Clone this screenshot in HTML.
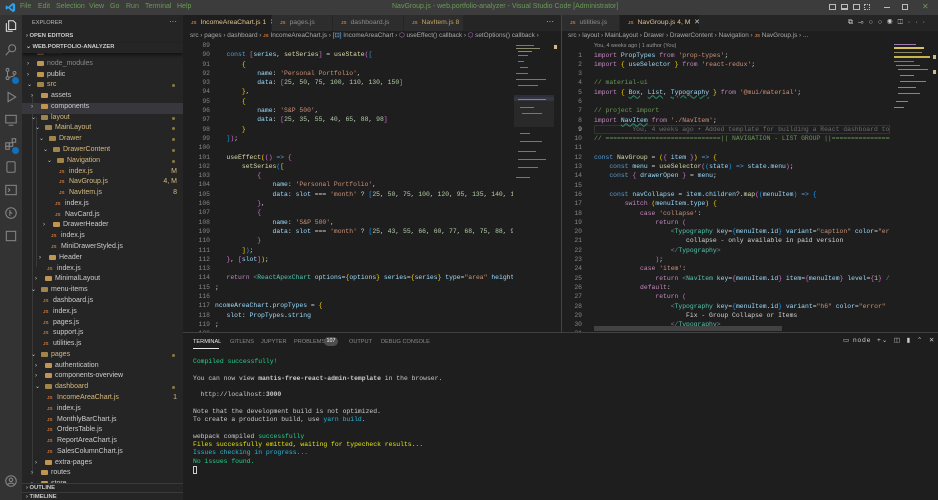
<!DOCTYPE html>
<html><head><meta charset="utf-8"><style>
*{margin:0;padding:0;box-sizing:border-box}
body{width:938px;height:500px;overflow:hidden;background:#1e1e1e;font-family:"Liberation Sans",sans-serif;position:relative;color:#ccc}
.a{position:absolute}
#title{left:0;top:0;width:938px;height:15px;background:#3c3c3c;font-size:7px;color:#ccc}
#title span.m{position:absolute;top:3px}
#act{left:0;top:15px;width:22px;height:485px;background:#333}
#side{left:22px;top:15px;width:161px;height:485px;background:#252526;font-size:7px;color:#ccc;overflow:hidden}
.row{position:absolute;left:0;width:161px;height:10.8px;line-height:10.8px;white-space:nowrap}
.row .t{position:absolute;top:0}
.fo{display:inline-block;width:7px;height:5px;background:#c09553;border-radius:1px;vertical-align:middle;margin-top:-1px}
.js{position:absolute;font-size:4.5px;font-weight:bold;color:#d0793a;top:0}
.dot{position:absolute;right:8px;top:4px;width:3px;height:3px;border-radius:50%;background:#8a7a3c}
.chev{position:absolute;top:0;color:#ccc;font-size:6px}
.tab{position:absolute;top:15px;height:16px;background:#2d2d2d;font-size:6.8px;line-height:16px;color:#8b8b8b;white-space:nowrap;padding-left:8px;border-right:1px solid #252526}
.tab.on{background:#1e1e1e;color:#e2c08d}
.tab b{font-size:4.5px;color:#d0793a;margin-right:4px}
.bc{position:absolute;top:31px;height:10px;font-size:6.4px;line-height:10px;color:#a9a9a9;white-space:nowrap;overflow:hidden}
pre{font-family:"Liberation Mono",monospace;font-size:6.4px;line-height:9.3px;color:#d4d4d4;position:absolute;white-space:pre}
.g{color:#858585;text-align:right}
.k{color:#569cd6}.c{color:#c586c0}.v{color:#9cdcfe}.f{color:#dcdcaa}.s{color:#ce9178}.n{color:#b5cea8}.m{color:#6a9955}.t{color:#4ec9b0}.b1{color:#ffd700}.b2{color:#da70d6}.b3{color:#179fff}.gr{color:#808080}.sq{text-decoration:underline wavy #2f8f6f}
#panel{left:183px;top:332px;width:755px;height:168px;background:#1e1e1e;border-top:1px solid #414141}
.pt{position:absolute;top:6px;font-size:5.6px;color:#8b8b8b}
.mini{position:absolute;height:1px}
</style></head><body>

<div id="title" class="a">
  <svg class="a" style="left:5px;top:2px" width="11" height="11" viewBox="0 0 24 24"><path d="M17 2 L22 4.5 V19.5 L17 22 L7 13.5 L3 16.5 L1.5 15.5 V8.5 L3 7.5 L7 10.5 Z M17 7 L11 12 L17 17 Z" fill="#2aa2f0"/></svg>
  <span class="m" style="left:20px">File</span><span class="m" style="left:38px">Edit</span><span class="m" style="left:56px">Selection</span><span class="m" style="left:89px">View</span><span class="m" style="left:110px">Go</span><span class="m" style="left:126px">Run</span><span class="m" style="left:145px">Terminal</span><span class="m" style="left:177px">Help</span>
  <span class="m" style="left:392px">NavGroup.js - web.portfolio-analyzer - Visual Studio Code [Administrator]</span>
  <div class="a" style="left:829px;top:4px;width:7px;height:6px;border:1px solid #bbb"></div>
  <div class="a" style="left:841px;top:4px;width:7px;height:6px;border:1px solid #bbb;border-bottom-width:2px"></div>
  <div class="a" style="left:853px;top:4px;width:7px;height:6px;border:1px solid #bbb"></div>
  <div class="a" style="left:864px;top:4px;width:6px;height:6px;border:1px dotted #bbb"></div>
  <div class="a" style="left:884px;top:7px;width:6px;height:1px;background:#bbb"></div>
  <div class="a" style="left:902px;top:4px;width:6px;height:6px;border:1px solid #bbb"></div>
  <span class="m" style="left:922px;font-size:8px;top:2px">✕</span>
</div>

<div id="act" class="a">
  <svg class="a" style="left:4px;top:4px" width="14" height="14" viewBox="0 0 24 24" fill="none" stroke="#e0e0e0" stroke-width="1.8"><path d="M8 3h8l4 4v11H8z M4 7v14h11"/></svg>
  <svg class="a" style="left:4px;top:28px" width="14" height="14" viewBox="0 0 24 24" fill="none" stroke="#858585" stroke-width="1.8"><circle cx="14" cy="9" r="6"/><path d="M10 13L3 21"/></svg>
  <svg class="a" style="left:4px;top:52px" width="14" height="14" viewBox="0 0 24 24" fill="none" stroke="#858585" stroke-width="1.8"><circle cx="6" cy="5" r="2.5"/><circle cx="6" cy="19" r="2.5"/><circle cx="18" cy="10" r="2.5"/><path d="M6 8v8 M18 13c0 4-6 3-10 5"/></svg>
  <div class="a" style="left:12px;top:62px;width:7px;height:7px;border-radius:50%;background:#0e70c0"></div>
  <svg class="a" style="left:4px;top:75px" width="14" height="14" viewBox="0 0 24 24" fill="none" stroke="#858585" stroke-width="1.8"><path d="M7 4l13 8-13 8z"/></svg>
  <svg class="a" style="left:4px;top:98px" width="14" height="14" viewBox="0 0 24 24" fill="none" stroke="#858585" stroke-width="1.8"><rect x="3" y="4" width="18" height="13"/><path d="M8 21h8"/></svg>
  <svg class="a" style="left:4px;top:122px" width="14" height="14" viewBox="0 0 24 24" fill="none" stroke="#858585" stroke-width="1.8"><rect x="3" y="10" width="6" height="6"/><rect x="9" y="10" width="6" height="6"/><rect x="3" y="16" width="6" height="5"/><rect x="14" y="3" width="6" height="6"/></svg>
  <div class="a" style="left:12px;top:132px;width:7px;height:7px;border-radius:50%;background:#0e70c0"></div>
  <svg class="a" style="left:4px;top:145px" width="14" height="14" viewBox="0 0 24 24" fill="none" stroke="#858585" stroke-width="1.8"><rect x="5" y="3" width="14" height="18" rx="2"/></svg>
  <svg class="a" style="left:4px;top:168px" width="14" height="14" viewBox="0 0 24 24" fill="none" stroke="#858585" stroke-width="1.8"><rect x="3" y="4" width="18" height="16"/><path d="M7 9l3 3-3 3"/></svg>
  <svg class="a" style="left:4px;top:191px" width="14" height="14" viewBox="0 0 24 24" fill="none" stroke="#858585" stroke-width="1.8"><circle cx="12" cy="12" r="9"/><path d="M10 7v10 M10 10l4 3"/></svg>
  <svg class="a" style="left:4px;top:214px" width="14" height="14" viewBox="0 0 24 24" fill="none" stroke="#858585" stroke-width="1.8"><rect x="4" y="4" width="16" height="16"/></svg>
  <svg class="a" style="left:4px;top:459px" width="14" height="14" viewBox="0 0 24 24" fill="none" stroke="#858585" stroke-width="1.8"><circle cx="12" cy="12" r="9"/><circle cx="12" cy="10" r="3"/><path d="M6 18c3-3 9-3 12 0"/></svg>
</div>

<div id="side" class="a">
  <div class="a" style="left:10px;top:5px;font-size:5.6px;color:#bbb">EXPLORER</div>
  <div class="a" style="left:147px;top:2px;font-size:8px;color:#bbb">···</div>
  <div class="a" style="left:4px;top:18px;font-size:5.8px;font-weight:bold;color:#ccc">›&nbsp;OPEN EDITORS</div>
  <div class="a" style="left:0;top:28px;width:161px;height:10px;box-shadow:0 2px 3px #111;background:#252526;z-index:2"></div>
  <div class="a" style="left:4px;top:29px;font-size:5.8px;font-weight:bold;color:#ccc;z-index:3">⌄&nbsp;WEB.PORTFOLIO-ANALYZER</div>
  <div class="a" style="left:0;top:88px;width:161px;height:10.8px;background:#37373d"></div>
  <div class="a" style="left:10px;top:80px;width:1px;height:380px;background:#3a3a3a"></div>
  <div class="a" style="left:14px;top:102px;width:1px;height:150px;background:#3a3a3a"></div>
  <div id="rows"></div>
  <div class="a" style="left:0;top:468px;width:161px;height:9px;border-top:1px solid #3a3a3a;font-size:5.8px;font-weight:bold;padding-left:4px;line-height:9px;background:#252526">›&nbsp;OUTLINE</div>
  <div class="a" style="left:0;top:477px;width:161px;height:9px;border-top:1px solid #3a3a3a;font-size:5.8px;font-weight:bold;padding-left:4px;line-height:9px;background:#252526">›&nbsp;TIMELINE</div>
</div>

<div class="tab on" style="left:183px;width:89px"><b>JS</b>IncomeAreaChart.js 1 <span style="color:#ccc">&nbsp;✕</span></div>
<div class="tab" style="left:272px;width:61px"><b>JS</b>pages.js</div>
<div class="tab" style="left:333px;width:71px"><b>JS</b>dashboard.js</div>
<div class="tab" style="left:404px;width:60px;color:#c5a35e"><b>JS</b>NavItem.js 8</div>
<div class="a" style="left:464px;top:15px;width:97px;height:16px;background:#252526"></div>
<div class="a" style="left:546px;top:17px;font-size:8px;color:#ccc">···</div>
<div class="tab" style="left:562px;width:58px"><b>JS</b>utilities.js</div>
<div class="tab on" style="left:620px;width:80px"><b>JS</b>NavGroup.js 4, M <span style="color:#ccc">&nbsp;✕</span></div>
<div class="a" style="left:700px;top:15px;width:238px;height:16px;background:#252526"></div>
<div class="a" style="left:848px;top:19px;font-size:7px;color:#ccc;letter-spacing:5px;white-space:nowrap">⧉⊸○○◉◫···</div>
<div class="a" style="left:561px;top:15px;width:1px;height:317px;background:#444"></div>

<div class="bc" style="left:190px;width:370px">src › pages › dashboard › <span style="color:#d0793a;font-size:4.5px;font-weight:bold">JS</span> IncomeAreaChart.js › <span style="color:#75beff">[⊡]</span> IncomeAreaChart › <span style="color:#b180d7">⬡</span> useEffect() callback › <span style="color:#b180d7">⬡</span> setOptions() callback ›</div>
<div class="bc" style="left:568px;width:370px">src › layout › MainLayout › Drawer › DrawerContent › Navigation › <span style="color:#d0793a;font-size:4.5px;font-weight:bold">JS</span> NavGroup.js › ...</div>

<pre class="g" style="left:183px;top:41px;width:27px">89
90
91
92
93
94
95
96
97
98
99
100
101
102
103
104
105
106
107
108
109
110
111
112
113
114
115
116
117
118
119
120</pre>
<div class="a" style="left:215px;top:41px;width:298px;height:291px;overflow:hidden">
<pre style="left:-3.84px;top:9.3px">
    <span class="k">const</span> <span class="b2">[</span><span class="v">series</span>, <span class="f">setSeries</span><span class="b2">]</span> = <span class="f">useState</span><span class="b2">(</span><span class="b3">[</span>
        <span class="b1">{</span>
            <span class="v">name</span>: <span class="s">'Personal Portfolio'</span>,
            <span class="v">data</span>: <span class="b2">[</span><span class="n">25</span>, <span class="n">50</span>, <span class="n">75</span>, <span class="n">100</span>, <span class="n">110</span>, <span class="n">130</span>, <span class="n">150</span><span class="b2">]</span>
        <span class="b1">}</span>,
        <span class="b1">{</span>
            <span class="v">name</span>: <span class="s">'S&amp;P 500'</span>,
            <span class="v">data</span>: <span class="b2">[</span><span class="n">25</span>, <span class="n">35</span>, <span class="n">55</span>, <span class="n">40</span>, <span class="n">65</span>, <span class="n">88</span>, <span class="n">98</span><span class="b2">]</span>
        <span class="b1">}</span>
    <span class="b3">]</span><span class="b2">)</span>;

    <span class="f">useEffect</span><span class="b1">(</span><span class="b2">()</span> <span class="k">=&gt;</span> <span class="b2">{</span>
        <span class="f">setSeries</span><span class="b3">(</span><span class="b1">[</span>
            <span class="b2">{</span>
                <span class="v">name</span>: <span class="s">'Personal Portfolio'</span>,
                <span class="v">data</span>: <span class="v">slot</span> === <span class="s">'month'</span> ? <span class="b3">[</span><span class="n">25</span>, <span class="n">50</span>, <span class="n">75</span>, <span class="n">100</span>, <span class="n">120</span>, <span class="n">95</span>, <span class="n">135</span>, <span class="n">140</span>, <span class="n">1</span>
            <span class="b2">}</span>,
            <span class="b2">{</span>
                <span class="v">name</span>: <span class="s">'S&amp;P 500'</span>,
                <span class="v">data</span>: <span class="v">slot</span> === <span class="s">'month'</span> ? <span class="b3">[</span><span class="n">25</span>, <span class="n">43</span>, <span class="n">55</span>, <span class="n">66</span>, <span class="n">60</span>, <span class="n">77</span>, <span class="n">68</span>, <span class="n">75</span>, <span class="n">88</span>, <span class="n">9</span>
            <span class="b2">}</span>
        <span class="b1">]</span><span class="b3">)</span>;
    <span class="b2">}</span>, <span class="b2">[</span><span class="v">slot</span><span class="b2">]</span><span class="b1">)</span>;

    <span class="c">return</span> <span class="gr">&lt;</span><span class="t">ReactApexChart</span> <span class="v">options</span>=<span class="b1">{</span><span class="v">options</span><span class="b1">}</span> <span class="v">series</span>=<span class="b1">{</span><span class="v">series</span><span class="b1">}</span> <span class="v">type</span>=<span class="s">"area"</span> <span class="v">height</span>
<span class="b1">}</span>;

<span class="v">IncomeAreaChart</span>.<span class="v">propTypes</span> = <span class="b1">{</span>
    <span class="v">slot</span>: <span class="v">PropTypes</span>.<span class="v">string</span>
<span class="b1">}</span>;
</pre></div>
<div class="a" style="left:514px;top:41px;width:40px;height:291px;background:#1e1e1e">
  <div class="mini" style="left:2px;top:4px;width:18px;background:#5a7fa0"></div>
  <div class="mini" style="left:2px;top:7px;width:24px;background:#8a8a6a"></div>
  <div class="mini" style="left:4px;top:10px;width:14px;background:#8a8a8a"></div>
  <div class="mini" style="left:4px;top:14px;width:10px;background:#777"></div>
  <div class="mini" style="left:4px;top:20px;width:6px;background:#777"></div>
  <div class="mini" style="left:6px;top:26px;width:8px;background:#777"></div>
  <div class="mini" style="left:2px;top:32px;width:12px;background:#777"></div>
  <div class="mini" style="left:2px;top:38px;width:30px;background:#777"></div>
  <div class="mini" style="left:4px;top:44px;width:20px;background:#777"></div>
  <div class="mini" style="left:0;top:54px;width:40px;height:6px;background:#2a2d3a"></div>
  <div class="mini" style="left:4px;top:58px;width:28px;background:#888"></div>
  <div class="mini" style="left:6px;top:66px;width:14px;background:#777"></div>
  <div class="mini" style="left:8px;top:72px;width:20px;background:#777"></div>
  <div class="a" style="left:0;top:56px;width:40px;height:30px;background:rgba(121,121,121,0.12)"></div>
  <div class="mini" style="left:6px;top:92px;width:10px;background:#777"></div>
  <div class="mini" style="left:6px;top:100px;width:22px;background:#777"></div>
  <div class="mini" style="left:4px;top:110px;width:18px;background:#777"></div>
  <div class="mini" style="left:4px;top:118px;width:28px;background:#777"></div>
  <div class="mini" style="left:4px;top:126px;width:20px;background:#777"></div>
  <div class="mini" style="left:2px;top:136px;width:14px;background:#777"></div>
</div>
<div class="a" style="left:554px;top:45px;width:3px;height:4px;background:#d7ba7d"></div>

<div class="a" style="left:594px;top:43px;font-size:5.5px;color:#999">You, 4 weeks ago | 1 author (You)</div>
<pre class="g" style="left:562px;top:50.5px;width:20px">1
2
3
4
5
6
7
8
<span style="color:#c6c6c6">9</span>
10
11
12
13
14
15
16
17
18
19
20
21
22
23
24
25
26
27
28
29
30
31</pre>
<div class="a" style="left:594px;top:124.5px;width:296px;height:9.3px;border:1px solid #333"></div>
<div class="a" style="left:594px;top:50.5px;width:296px;height:281px;overflow:hidden">
<pre style="left:0;top:0"><span class="c">import</span> <span class="v">PropTypes</span> <span class="c">from</span> <span class="s">'prop-types'</span>;
<span class="c">import</span> <span class="b1">{</span> <span class="v">useSelector</span> <span class="b1">}</span> <span class="c">from</span> <span class="s">'react-redux'</span>;

<span class="m">// material-ui</span>
<span class="c">import</span> <span class="b1">{</span> <span class="v sq">Box</span>, <span class="v sq">List</span>, <span class="v sq">Typography</span> <span class="b1">}</span> <span class="c">from</span> <span class="s">'@mui/material'</span>;

<span class="m">// project import</span>
<span class="c">import</span> <span class="v sq">NavItem</span> <span class="c">from</span> <span class="s">'./NavItem'</span>;
<span style="color:#6b6b6b">          You, 4 weeks ago • Added template for building a React dashboard to …</span>
<span class="m">// ==============================|| NAVIGATION - LIST GROUP ||==============================</span>

<span class="k">const</span> <span class="f">NavGroup</span> = <span class="b1">(</span><span class="b2">{</span> <span class="v">item</span> <span class="b2">}</span><span class="b1">)</span> <span class="k">=&gt;</span> <span class="b1">{</span>
    <span class="k">const</span> <span class="v">menu</span> = <span class="f">useSelector</span><span class="b2">(</span><span class="b3">(</span><span class="v">state</span><span class="b3">)</span> <span class="k">=&gt;</span> <span class="v">state</span>.<span class="v">menu</span><span class="b2">)</span>;
    <span class="k">const</span> <span class="b2">{</span> <span class="v">drawerOpen</span> <span class="b2">}</span> = <span class="v">menu</span>;

    <span class="k">const</span> <span class="v">navCollapse</span> = <span class="v">item</span>.<span class="v">children</span>?.<span class="f">map</span><span class="b2">(</span><span class="b3">(</span><span class="v">menuItem</span><span class="b3">)</span> <span class="k">=&gt;</span> <span class="b3">{</span>
        <span class="c">switch</span> <span class="b1">(</span><span class="v">menuItem</span>.<span class="v">type</span><span class="b1">)</span> <span class="b1">{</span>
            <span class="c">case</span> <span class="s">'collapse'</span>:
                <span class="c">return</span> <span class="b2">(</span>
                    <span class="gr">&lt;</span><span class="t">Typography</span> <span class="v">key</span>=<span class="b3">{</span><span class="v">menuItem</span>.<span class="v">id</span><span class="b3">}</span> <span class="v">variant</span>=<span class="s">"caption"</span> <span class="v">color</span>=<span class="s">"error"</span>
                        collapse - only available in paid version
                    <span class="gr">&lt;/</span><span class="t">Typography</span><span class="gr">&gt;</span>
                <span class="b2">)</span>;
            <span class="c">case</span> <span class="s">'item'</span>:
                <span class="c">return</span> <span class="gr">&lt;</span><span class="t">NavItem</span> <span class="v">key</span>=<span class="b2">{</span><span class="v">menuItem</span>.<span class="v">id</span><span class="b2">}</span> <span class="v">item</span>=<span class="b2">{</span><span class="v">menuItem</span><span class="b2">}</span> <span class="v">level</span>=<span class="b2">{</span><span class="n">1</span><span class="b2">}</span> <span class="gr">/&gt;</span>;
            <span class="c">default</span>:
                <span class="c">return</span> <span class="b2">(</span>
                    <span class="gr">&lt;</span><span class="t">Typography</span> <span class="v">key</span>=<span class="b3">{</span><span class="v">menuItem</span>.<span class="v">id</span><span class="b3">}</span> <span class="v">variant</span>=<span class="s">"h6"</span> <span class="v">color</span>=<span class="s">"error"</span> <span class="v">align</span>
                        Fix - Group Collapse or Items
                    <span class="gr">&lt;/</span><span class="t">Typography</span><span class="gr">&gt;</span>
</pre></div>
<div class="a" style="left:594px;top:326px;width:188px;height:5px;background:#424242"></div>
<div class="a" style="left:892px;top:41px;width:40px;height:291px">
  <div class="mini" style="left:2px;top:3px;width:22px;background:#a07ab0"></div>
  <div class="mini" style="left:2px;top:6px;width:30px;background:#d7c060;height:2px"></div>
  <div class="mini" style="left:2px;top:11px;width:28px;background:#8a8a6a"></div>
  <div class="mini" style="left:2px;top:15px;width:36px;background:#c9b44a;height:2px"></div>
  <div class="mini" style="left:2px;top:20px;width:20px;background:#5a7fa0"></div>
  <div class="mini" style="left:4px;top:24px;width:24px;background:#6a8aa0"></div>
  <div class="mini" style="left:6px;top:28px;width:30px;background:#5a9a8a"></div>
  <div class="mini" style="left:8px;top:34px;width:14px;background:#888"></div>
  <div class="mini" style="left:8px;top:40px;width:26px;background:#5a9a8a"></div>
  <div class="mini" style="left:6px;top:46px;width:18px;background:#888"></div>
  <div class="mini" style="left:6px;top:52px;width:22px;background:#5a9a8a"></div>
  <div class="mini" style="left:4px;top:60px;width:12px;background:#888"></div>
  <div class="mini" style="left:2px;top:66px;width:10px;background:#888"></div>
</div>
<div class="a" style="left:933px;top:55px;width:3px;height:4px;background:#d7ba7d"></div>
<div class="a" style="left:933px;top:70px;width:3px;height:4px;background:#d7ba7d"></div>

<div id="panel" class="a">
  <div class="pt" style="left:10px;color:#e7e7e7">TERMINAL</div>
  <div class="a" style="left:10px;top:15px;width:26px;height:1px;background:#e7e7e7"></div>
  <div class="pt" style="left:47px">GITLENS</div>
  <div class="pt" style="left:78px">JUPYTER</div>
  <div class="pt" style="left:111px">PROBLEMS</div>
  <div class="a" style="left:141px;top:4px;width:14px;height:9px;border-radius:5px;background:#4d4d4d;font-size:5.4px;color:#fff;text-align:center;line-height:9px">107</div>
  <div class="pt" style="left:166px">OUTPUT</div>
  <div class="pt" style="left:198px">DEBUG CONSOLE</div>
  <div class="a" style="left:660px;top:3px;font-size:6.5px;color:#ccc;white-space:nowrap;letter-spacing:1px">▭ node &nbsp;+⌄ &nbsp;◫ &nbsp;▮ &nbsp;⌃ &nbsp;✕</div>
<pre style="left:10px;top:25px;line-height:8.3px;font-size:6.4px;color:#cccccc"><span style="color:#23d18b">Compiled successfully!</span>

You can now view <b>mantis-free-react-admin-template</b> in the browser.

  http://localhost:<b>3000</b>

Note that the development build is not optimized.
To create a production build, use <span style="color:#29b8db">yarn build</span>.

webpack compiled <span style="color:#23d18b">successfully</span>
<span style="color:#e5e510">Files successfully emitted, waiting for typecheck results...</span>
<span style="color:#29b8db">Issues checking in progress...</span>
<span style="color:#23d18b">No issues found.</span>
<span style="display:inline-block;width:4px;height:8px;border:1px solid #ccc"></span></pre>
</div>

<script>
var R=[
["build",1,"f",28],["node_modules",1,"f",0],["public",1,"f",0],["src",1,"fo",1],["assets",2,"f",0],["components",2,"f",0],["layout",2,"fo",1],["MainLayout",3,"fo",1],["Drawer",4,"fo",1],["DrawerContent",5,"fo",1],["Navigation",6,"fo",1],
["index.js",7,"j","M"],["NavGroup.js",7,"j","4, M"],["NavItem.js",7,"j","8"],["index.js",6,"jw",""],["NavCard.js",6,"jw",""],["DrawerHeader",5,"f",0],["index.js",5,"jw",""],["MiniDrawerStyled.js",5,"jw",""],["Header",4,"f",0],["index.js",4,"jw",""],["MinimalLayout",3,"f",0],["menu-items",2,"fow",0],
["dashboard.js",3,"jw",""],["index.js",3,"jw",""],["pages.js",3,"jw",""],["support.js",3,"jw",""],["utilities.js",3,"jw",""],["pages",2,"fo",1],["authentication",3,"f",0],["components-overview",3,"f",0],["dashboard",3,"fo",1],["IncomeAreaChart.js",4,"j","1"],["index.js",4,"jw",""],["MonthlyBarChart.js",4,"jw",""],["OrdersTable.js",4,"jw",""],["ReportAreaChart.js",4,"jw",""],["SalesColumnChart.js",4,"jw",""],["extra-pages",3,"f",0],["routes",2,"f",0],["store",2,"f",0]];
var h="";
R.forEach(function(r,i){
 var top=33+i*10.78, x=11+r[1]*4, name=r[0], ty=r[2];
 var col=(ty=="fo"||ty=="j")?"#d7ba7d":"#cccccc";
 if(name=="node_modules"||name=="build")col="#8a8a8a";
 var s='<div class="row" style="top:'+top+'px">';
 if(ty[0]=="f"){
  var open=(ty=="fo"||ty=="fow");
  s+='<span class="chev" style="left:'+(x-10)+'px">'+(open?'⌄':'›')+'</span>';
  s+='<span class="fo" style="position:absolute;left:'+x+'px;top:3px;'+(open?'background:#a0844a':'')+'"></span>';
  s+='<span class="t" style="left:'+(x+10)+'px;color:'+col+'">'+name+'</span>';
  if(r[3]===1)s+='<span class="dot"></span>';
 }else{
  s+='<span class="js" style="left:'+(x-2)+'px">JS</span>';
  s+='<span class="t" style="left:'+(x+8)+'px;color:'+col+'">'+name+'</span>';
  if(r[3])s+='<span class="t" style="right:6px;color:#d7ba7d">'+r[3]+'</span>';
 }
 s+='</div>';h+=s;
});
document.getElementById("rows").innerHTML=h;
</script>
</body></html>
